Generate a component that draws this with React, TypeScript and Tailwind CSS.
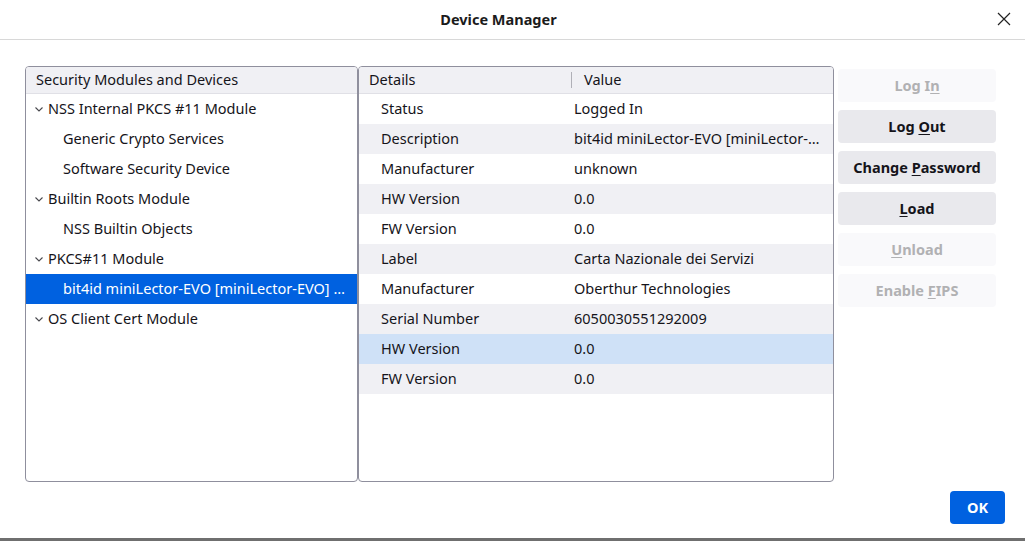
import React from "react";

const tree = [
  { label: "NSS Internal PKCS #11 Module", level: 0 },
  { label: "Generic Crypto Services", level: 1 },
  { label: "Software Security Device", level: 1 },
  { label: "Builtin Roots Module", level: 0 },
  { label: "NSS Builtin Objects", level: 1 },
  { label: "PKCS#11 Module", level: 0 },
  { label: "bit4id miniLector-EVO [miniLector-EVO] …", level: 1, selected: true },
  { label: "OS Client Cert Module", level: 0 },
];

const details = [
  ["Status", "Logged In"],
  ["Description", "bit4id miniLector-EVO [miniLector-…"],
  ["Manufacturer", "unknown"],
  ["HW Version", "0.0"],
  ["FW Version", "0.0"],
  ["Label", "Carta Nazionale dei Servizi"],
  ["Manufacturer", "Oberthur Technologies"],
  ["Serial Number", "6050030551292009"],
  ["HW Version", "0.0"],
  ["FW Version", "0.0"],
];

function Chevron() {
  return (
    <svg width="10" height="10" viewBox="0 0 10 10" className="mr-[4px] shrink-0">
      <path d="M1.5 3.5 L5 7 L8.5 3.5" fill="none" stroke="#4a4a4f" strokeWidth="1.1" />
    </svg>
  );
}

function Btn({ pre, key1, post, disabled }: { pre: string; key1: string; post: string; disabled?: boolean }) {
  return (
    <button
      type="button"
      className={
        "h-[33px] w-full rounded-[4px] text-[14.5px] font-bold " +
        (disabled ? "bg-[#f9f9fb] text-[#b1b1b3]" : "bg-[#e9e9ed] text-[#15141a]")
      }
    >
      {pre}
      <span className="underline underline-offset-2">{key1}</span>
      {post}
    </button>
  );
}

export default function App() {
  return (
    <div
      className="h-[541px] w-full bg-white flex flex-col text-[#15141a] relative"
      style={{ fontFamily: '"Noto Sans", "Open Sans", sans-serif' }}
    >
      <div className="h-[40px] border-b border-[#d8d8d8] flex items-center justify-center pr-[28px] relative shrink-0">
        <span className="text-[14.5px] font-bold text-[#1b1b1b]">Device Manager</span>
        <svg width="14" height="14" viewBox="0 0 14 14" className="absolute right-[14px] top-[12px]">
          <path d="M1 1 L13 13 M13 1 L1 13" stroke="#222" strokeWidth="1.2" />
        </svg>
      </div>

      <div className="flex pl-[25px] pt-[26px]">
        <div className="w-[333px] h-[416px] border border-[#8f8f9d] rounded-[4px] overflow-hidden flex flex-col">
          <div className="h-[27px] shrink-0 bg-[#f0f0f4] border-b border-[#e0e0e6] flex items-center pl-[10px] text-[14.5px]">
            Security Modules and Devices
          </div>
          {tree.map((t, i) => (
            <div
              key={i}
              className={
                "h-[30px] shrink-0 flex items-center text-[14.5px] whitespace-nowrap " +
                (t.selected ? "bg-[#0061e0] text-white" : "")
              }
              style={{ paddingLeft: t.level === 0 ? 8 : 37 }}
            >
              {t.level === 0 && <Chevron />}
              {t.label}
            </div>
          ))}
        </div>

        <div className="w-[476px] h-[416px] border border-[#8f8f9d] rounded-[4px] overflow-hidden flex flex-col">
          <div className="h-[27px] shrink-0 bg-[#f0f0f4] border-b border-[#e0e0e6] flex items-center text-[14.5px]">
            <div className="w-[213px] pl-[10px] border-r border-[#b0b0b7] h-[16px] flex items-center">Details</div>
            <div className="pl-[12px]">Value</div>
          </div>
          {details.map(([k, v], i) => (
            <div
              key={i}
              className={
                "h-[30px] shrink-0 flex items-center text-[14.5px] whitespace-nowrap " +
                (i === 8 ? "bg-[#cfe1f7]" : i % 2 === 1 ? "bg-[#f0f0f4]" : "")
              }
            >
              <div className="w-[215px] pl-[22px]">{k}</div>
              <div>{v}</div>
            </div>
          ))}
        </div>

        <div className="w-[158px] ml-[4px] pt-[3px] flex flex-col gap-[8px]">
          <Btn pre="Log I" key1="n" post="" disabled />
          <Btn pre="Log " key1="O" post="ut" />
          <Btn pre="Change " key1="P" post="assword" />
          <Btn pre="" key1="L" post="oad" />
          <Btn pre="" key1="U" post="nload" disabled />
          <Btn pre="Enable " key1="F" post="IPS" disabled />
        </div>
      </div>

      <div className="flex justify-end pr-[20px] pt-[9px]">
        <button type="button" className="h-[33px] w-[55px] rounded-[4px] bg-[#0061e0] text-white text-[14.5px] font-bold">
          OK
        </button>
      </div>

      <div className="absolute bottom-0 left-0 right-0 h-[3px] bg-[#6f6f6f]" />
    </div>
  );
}
